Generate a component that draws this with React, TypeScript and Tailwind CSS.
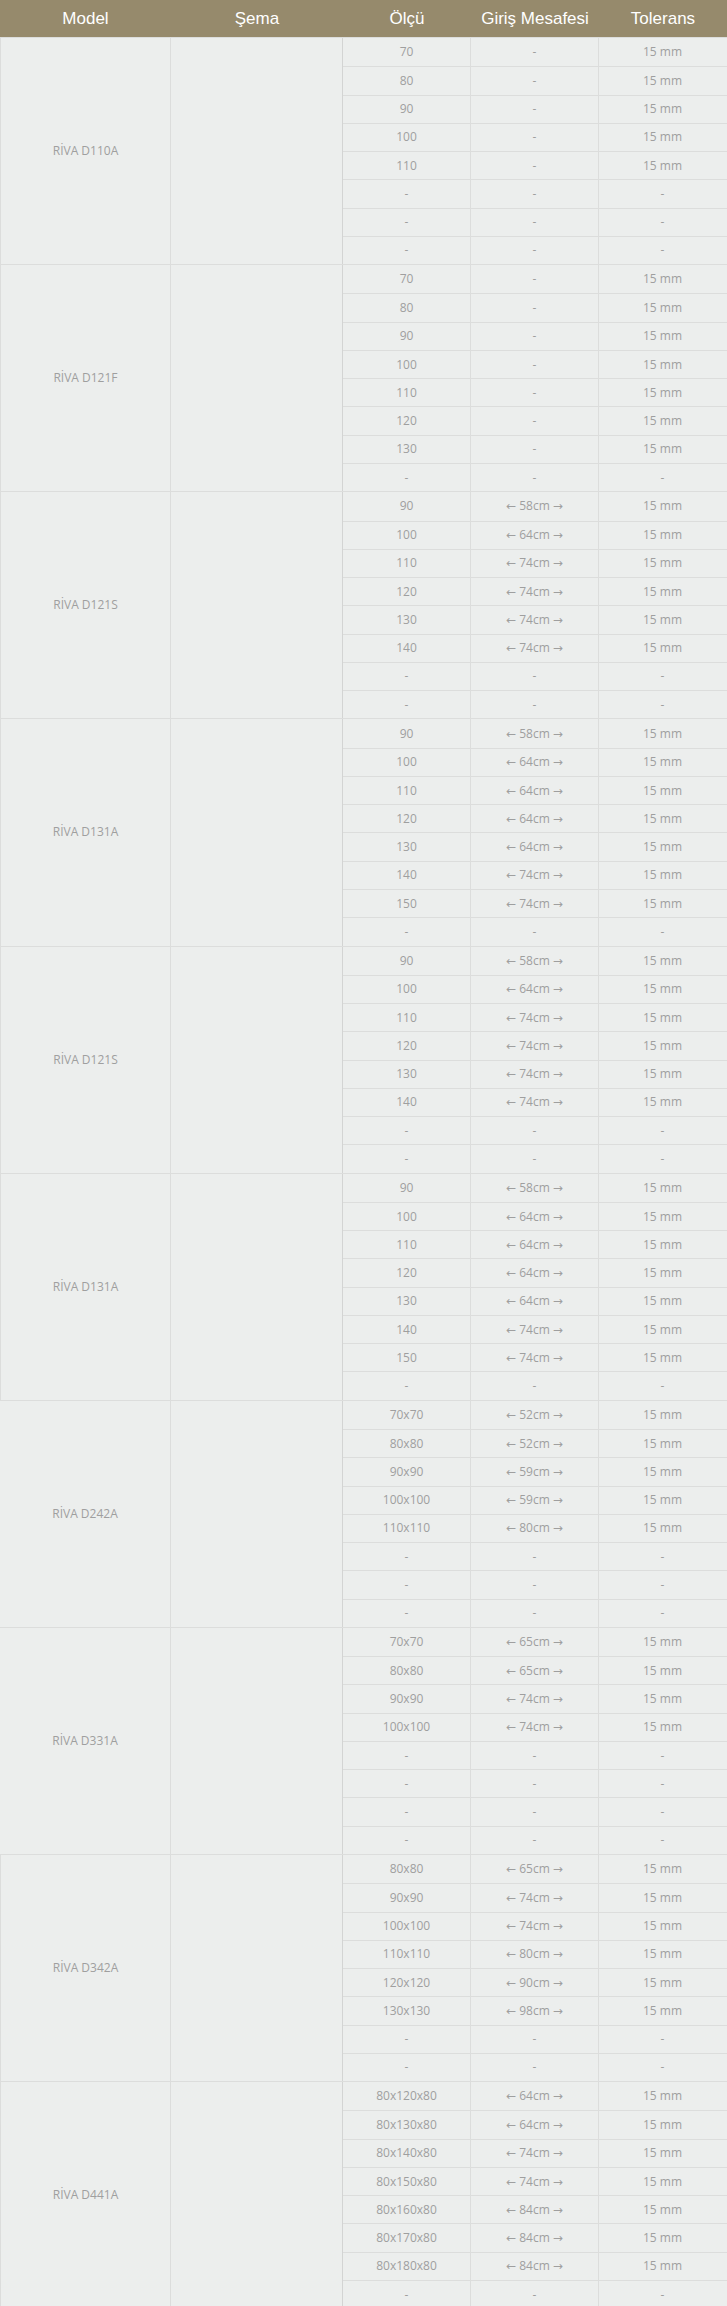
import React from 'react';

type Row = [string, string, string];

const dash: Row = ['-', '-', '-'];
const r = (size: string, dist?: number): Row => [size, dist ? `${dist}cm` : '-', '15 mm'];

const groups: { model: string; left: boolean; rows: Row[] }[] = [
  { model: 'RİVA D110A', left: true, rows: [r('70'), r('80'), r('90'), r('100'), r('110'), dash, dash, dash] },
  { model: 'RİVA D121F', left: true, rows: [r('70'), r('80'), r('90'), r('100'), r('110'), r('120'), r('130'), dash] },
  { model: 'RİVA D121S', left: true, rows: [r('90', 58), r('100', 64), r('110', 74), r('120', 74), r('130', 74), r('140', 74), dash, dash] },
  { model: 'RİVA D131A', left: true, rows: [r('90', 58), r('100', 64), r('110', 64), r('120', 64), r('130', 64), r('140', 74), r('150', 74), dash] },
  { model: 'RİVA D121S', left: true, rows: [r('90', 58), r('100', 64), r('110', 74), r('120', 74), r('130', 74), r('140', 74), dash, dash] },
  { model: 'RİVA D131A', left: true, rows: [r('90', 58), r('100', 64), r('110', 64), r('120', 64), r('130', 64), r('140', 74), r('150', 74), dash] },
  { model: 'RİVA D242A', left: false, rows: [r('70x70', 52), r('80x80', 52), r('90x90', 59), r('100x100', 59), r('110x110', 80), dash, dash, dash] },
  { model: 'RİVA D331A', left: false, rows: [r('70x70', 65), r('80x80', 65), r('90x90', 74), r('100x100', 74), dash, dash, dash, dash] },
  { model: 'RİVA D342A', left: true, rows: [r('80x80', 65), r('90x90', 74), r('100x100', 74), r('110x110', 80), r('120x120', 90), r('130x130', 98), dash, dash] },
  { model: 'RİVA D441A', left: true, rows: [r('80x120x80', 64), r('80x130x80', 64), r('80x140x80', 74), r('80x150x80', 74), r('80x160x80', 84), r('80x170x80', 84), r('80x180x80', 84), dash] },
];

const headers = ['Model', 'Şema', 'Ölçü', 'Giriş Mesafesi', 'Tolerans'];

// distance cell: arrows either side of the value
const Cell = ({ text, dist }: { text: string; dist: boolean }) => {
  if (!dist || text === '-') return <>{text}</>;
  return (
    <span className="flex items-center gap-[3px]">
      <span className="font-['DejaVu_Sans',sans-serif] text-[12px]">←</span>
      {text}
      <span className="font-['DejaVu_Sans',sans-serif] text-[12px]">→</span>
    </span>
  );
};

export default function App() {
  return (
    <div className="w-[727px] bg-[#eceeed] font-['Open_Sans',sans-serif] text-[12px] text-[#9f9f9f]">
      <div className="grid h-[37px] grid-cols-[171px_172px_128px_128px_128px] bg-[#968a6c] font-['Liberation_Sans',Arial,sans-serif] text-[17px] text-white">
        {headers.map((h) => (
          <div key={h} className="flex items-center justify-center">
            {h}
          </div>
        ))}
      </div>

      {groups.map((g, gi) => (
        <div key={gi} className="flex border-t border-[#dcdddc] first:border-t-0">
          <div
            className={`flex w-[171px] shrink-0 items-center justify-center border-r border-[#dcdddc] ${
              g.left ? 'border-l' : ''
            }`}
          >
            {g.model}
          </div>
          <div className="w-[172px] shrink-0 border-r border-[#d3d4d3]" />
          <div className="flex flex-1 flex-col">
            {g.rows.map((row, ri) => (
              <div
                key={ri}
                className={`grid h-[28.27px] grid-cols-[127px_128px_128px] ${
                  ri > 0 ? 'border-t border-[#dcdddc]' : ''
                }`}
              >
                {row.map((cell, ci) => (
                  <div
                    key={ci}
                    className={`flex items-center justify-center ${ci > 0 ? 'border-l border-[#dcdddc]' : ''}`}
                  >
                    <Cell text={cell} dist={ci === 1} />
                  </div>
                ))}
              </div>
            ))}
          </div>
        </div>
      ))}
    </div>
  );
}
